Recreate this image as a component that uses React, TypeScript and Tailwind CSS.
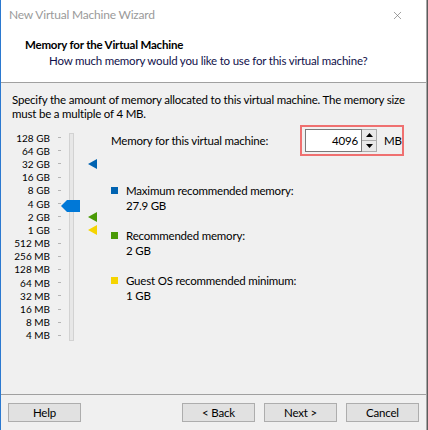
import React from 'react';
import { X } from 'lucide-react';

const FONT = { fontFamily: 'Lato, "Segoe UI", sans-serif' };

const levels = [
  '128 GB', '64 GB', '32 GB', '16 GB', '8 GB', '4 GB', '2 GB', '1 GB',
  '512 MB', '256 MB', '128 MB', '64 MB', '32 MB', '16 MB', '8 MB', '4 MB',
];

// which row gets which marker colour
const markers: Record<number, string> = {
  2: '#0063b1',
  6: '#4a9a06',
  7: '#f5d400',
};

const Triangle = ({ color }: { color: string }) => (
  <svg width="9" height="10" viewBox="0 0 9 10">
    <polygon points="0,5 9,0 9,10" fill={color} />
  </svg>
);

const Legend = ({ color, label, value }: { color: string; label: string; value: string }) => (
  <div className="flex items-start">
    <div className="w-[7px] h-[7px] mt-[4px] mr-[8px]" style={{ backgroundColor: color }} />
    <div className="leading-[15px]">
      <div>{label}</div>
      <div>{value}</div>
    </div>
  </div>
);

const Boton = ({ children }: { children: React.ReactNode }) => (
  <button className="w-[73px] h-[19px] bg-[#e1e1e1] border border-[#adadad] text-[11.5px] tracking-[-0.2px] leading-[17px] text-black">
    {children}
  </button>
);

export default function App() {
  return (
    <div className="w-[428px] h-[430px] bg-[#5c5c5c] overflow-hidden">
      <div
        className="w-[427px] h-[430px] bg-[#f0f0f0] border-l border-[#2b79d0] border-r border-r-[#a6a6a6] flex flex-col text-[11.5px] tracking-[-0.2px] text-black"
        style={FONT}
      >
        {/* barra de título + encabezado */}
        <div className="bg-white border-b border-[#a0a0a0] h-[83px] flex flex-col">
          <div className="h-[30px] flex items-center justify-between pl-[8px] pr-[22px]">
            <span className="text-[#9a9a9a] text-[12px]">New Virtual Machine Wizard</span>
            <X size={13} strokeWidth={1.2} className="text-[#707070]" />
          </div>
          <div className="pl-[24px] leading-[16px] pt-[7px]">
            <div className="font-bold">Memory for the Virtual Machine</div>
            <div className="pl-[24px] text-[#10104a]">How much memory would you like to use for this virtual machine?</div>
          </div>
        </div>

        {/* cuerpo */}
        <div className="flex-1 pl-[11px] pt-[10px]">
          <div className="leading-[14px] pr-[4px]">
            Specify the amount of memory allocated to this virtual machine. The memory size must be a multiple of 4 MB.
          </div>

          <div className="flex mt-[4px]">
            {/* escala */}
            <div className="flex pt-[6px]">
              <div className="flex flex-col">
                {levels.map((l) => (
                  <div key={l} className="h-[13.2px] flex items-center">
                    <span className="w-[38px] text-right text-[10px] tracking-normal leading-none whitespace-nowrap">{l}</span>
                    <span className="ml-[8px] w-[3px] h-px bg-[#b4b4b4]" />
                  </div>
                ))}
              </div>
              <div className="relative ml-[8px] mt-[2px] h-[208px] w-[5px] bg-[#e7e7e7] border border-[#d2d2d2]">
                <svg
                  className="absolute left-[-9px] top-[66px]"
                  width="19"
                  height="12"
                  viewBox="0 0 19 12"
                >
                  <polygon points="0,6 6,0 19,0 19,12 6,12" fill="#0078d7" />
                </svg>
              </div>
              <div className="flex flex-col ml-[14px]">
                {levels.map((l, i) => (
                  <div key={l} className="h-[13.2px] flex items-center">
                    {markers[i] ? <Triangle color={markers[i]} /> : <span className="w-[9px]" />}
                  </div>
                ))}
              </div>
            </div>

            {/* lado derecho */}
            <div className="flex-1 ml-[14px]">
              <div className="flex items-center h-[31px]">
                <span className="w-[189px]">Memory for this virtual machine:</span>
                <div className="h-[31px] w-[104px] border-2 border-[#ef7070] flex items-center pl-[3px]">
                  <div className="h-[23px] w-[57px] bg-white border border-[#7a7a7a] flex items-center justify-end pr-[3px]">
                    4096
                  </div>
                  <div className="flex flex-col h-[23px] w-[15px] border-y border-r border-[#adadad] bg-[#e9e9e9]">
                    <div className="flex-1 flex items-center justify-center border-b border-[#adadad]">
                      <svg width="7" height="4" viewBox="0 0 7 4">
                        <polygon points="0,4 3.5,0 7,4" fill="#000" />
                      </svg>
                    </div>
                    <div className="flex-1 flex items-center justify-center">
                      <svg width="7" height="4" viewBox="0 0 7 4">
                        <polygon points="0,0 7,0 3.5,4" fill="#000" />
                      </svg>
                    </div>
                  </div>
                  <span className="ml-[7px]">MB</span>
                </div>
              </div>

              <div className="mt-[27px] flex flex-col gap-[15px]">
                <Legend color="#0063b1" label="Maximum recommended memory:" value="27.9 GB" />
                <Legend color="#4a9a06" label="Recommended memory:" value="2 GB" />
                <Legend color="#f5d400" label="Guest OS recommended minimum:" value="1 GB" />
              </div>
            </div>
          </div>
        </div>

        {/* botones */}
        <div className="h-[36px] border-t border-[#a0a0a0] flex items-start pt-[8px] pl-[7px]">
          <Boton>Help</Boton>
          <div className="flex gap-[9px] ml-auto mr-[7px]">
            <Boton>&lt; Back</Boton>
            <Boton>Next &gt;</Boton>
            <Boton>Cancel</Boton>
          </div>
        </div>
      </div>
    </div>
  );
}
